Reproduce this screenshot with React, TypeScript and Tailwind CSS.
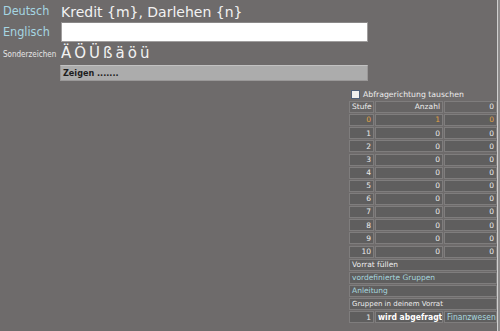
import React from "react";

const rows = [0, 1, 2, 3, 4, 5, 6, 7, 8, 9, 10];

function Cell({
  children,
  className = "",
}: {
  children?: React.ReactNode;
  className?: string;
}) {
  return (
    <div
      className={
        "h-[12px] border border-[#7f7d7d] bg-[#5f5e5e] px-[2px] flex items-center leading-none overflow-hidden whitespace-nowrap " +
        className
      }
    >
      {children}
    </div>
  );
}

const chars = ["Ä", "Ö", "Ü", "ß", "ä", "ö", "ü"];

export default function App() {
  return (
    <div className="w-[500px] h-[331px] bg-[#6e6b6b] flex overflow-hidden [font-family:'DejaVu_Sans',sans-serif]">
      <div className="w-[497px] flex flex-col">
        {/* Deutsch */}
        <div className="h-[21px] flex items-center">
          <div className="w-[61px] pl-[3px] text-[12.5px] text-[#a6d6e2] leading-none mt-[2px] [font-family:'DejaVu_Sans_Condensed',sans-serif]">
            Deutsch
          </div>
          <div className="text-[14px] text-[#f2f2f2] leading-none mt-[2px]">
            Kredit {"{m}"}, Darlehen {"{n}"}
          </div>
        </div>
        {/* Englisch */}
        <div className="h-[21px] flex items-center">
          <div className="w-[61px] pl-[3px] text-[12.5px] text-[#a6d6e2] leading-none mt-[2px] [font-family:'DejaVu_Sans_Condensed',sans-serif]">
            Englisch
          </div>
          <div className="w-[307px] h-[20px] bg-white border border-[#a09e9e] border-t-[#8a8888]" />
        </div>
        {/* Sonderzeichen */}
        <div className="h-[23px] flex items-center">
          <div className="w-[61px] pl-[3px] text-[8px] text-[#e6e6e6] leading-none mt-[2px] [font-family:'DejaVu_Sans_Condensed',sans-serif]">
            Sonderzeichen
          </div>
          <div className="flex gap-[3px] text-[15px] text-[#f2f2f2] leading-none">
            {chars.map((c) => (
              <span key={c}>{c}</span>
            ))}
          </div>
        </div>
        {/* Zeigen */}
        <div className="h-[16px] flex">
          <div className="ml-[60px] w-[308px] h-[16px] bg-[#acacac] border border-[#9a9898] border-t-[#c2c2c2] flex items-center pl-[2px] text-[9px] font-bold text-[#1e1e1e] leading-none [font-family:'DejaVu_Sans_Condensed',sans-serif]">
            Zeigen .......
          </div>
        </div>

        {/* Right panel */}
        <div className="mt-[7px] ml-[349px] w-[148px] flex flex-col text-[7.5px] text-[#ececec]">
          <div className="h-[13px] flex items-center pl-[2px] gap-[3px]">
            <div className="w-[9px] h-[9px] border border-[#4c5d78] bg-[#eeeeee]" />
            <span className="leading-none text-[7.75px] whitespace-nowrap">
              Abfragerichtung tauschen
            </span>
          </div>
          <div className="grid grid-cols-[25px_68px_53px] gap-x-[1px] gap-y-[1.15px]">
            <Cell className="bg-[#666464]">Stufe</Cell>
            <Cell className="bg-[#666464] justify-end">Anzahl</Cell>
            <Cell className="bg-[#666464] justify-end">0</Cell>
            {rows.map((r) => (
              <React.Fragment key={r}>
                <Cell
                  className={
                    "justify-end " +
                    (r === 0 ? "text-[#e0a244] bg-[#5b5a5a]" : "")
                  }
                >
                  {r}
                </Cell>
                <Cell
                  className={
                    "justify-end " +
                    (r === 0 ? "text-[#e0a244] bg-[#5b5a5a]" : "")
                  }
                >
                  {r === 0 ? 1 : 0}
                </Cell>
                <Cell
                  className={
                    "justify-end " +
                    (r === 0 ? "text-[#e0a244] bg-[#5b5a5a]" : "")
                  }
                >
                  0
                </Cell>
              </React.Fragment>
            ))}
            <Cell className="col-span-3">Vorrat füllen</Cell>
            <Cell className="col-span-3 text-[#a6d6df]">vordefinierte Gruppen</Cell>
            <Cell className="col-span-3 text-[#a6d6df]">Anleitung</Cell>
            <Cell className="col-span-3 text-[7px]">Gruppen in deinem Vorrat</Cell>
            <Cell className="justify-end">1</Cell>
            <Cell className="font-bold text-white text-[8.5px] [font-family:'DejaVu_Sans_Condensed',sans-serif]">
              wird abgefragt
            </Cell>
            <Cell className="text-[#a6d6df] px-[1px] text-[8.5px] [font-family:'DejaVu_Sans_Condensed',sans-serif]">
              Finanzwesen
            </Cell>
          </div>
        </div>
      </div>
      <div className="w-[1px] h-full bg-[#cfcfcf]" />
      <div className="w-[2px] h-full bg-[#8c8a8a]" />
    </div>
  );
}
